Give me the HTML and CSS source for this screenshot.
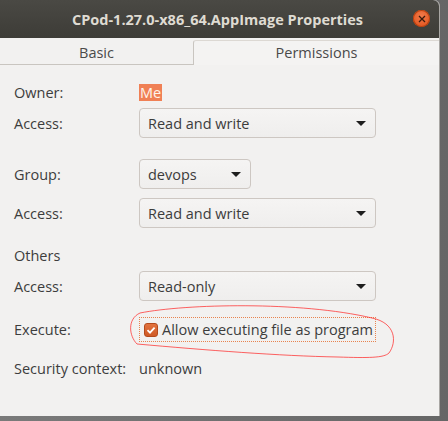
FILE: index.html
```html
<!DOCTYPE html>
<html>
<head>
<meta charset="utf-8">
<link rel="stylesheet" href="styles.css">
</head>
<body>
<div class="window">
  <div class="titlebar">
    <span class="title">CPod-1.27.0-x86_64.AppImage Properties</span>
    <span class="close"><svg width="8" height="8" viewBox="0 0 8 8"><path d="M1 1L7 7M7 1L1 7" stroke="#3a1a0c" stroke-width="1.3"/></svg></span>
  </div>
  <div class="tabs">
    <div class="tab">Basic</div>
    <div class="tab active">Permissions</div>
  </div>
  <div class="content">
    <div class="row r-owner">
      <span class="label">Owner:</span>
      <span class="value"><span class="sel">Me</span></span>
    </div>
    <div class="row r-access1">
      <span class="label">Access:</span>
      <div class="combo wide"><span>Read and write</span><span class="arrow"></span></div>
    </div>
    <div class="row r-group">
      <span class="label">Group:</span>
      <div class="combo narrow"><span>devops</span><span class="arrow"></span></div>
    </div>
    <div class="row r-access2">
      <span class="label">Access:</span>
      <div class="combo wide"><span>Read and write</span><span class="arrow"></span></div>
    </div>
    <div class="row r-others">
      <span class="label">Others</span>
    </div>
    <div class="row r-access3">
      <span class="label">Access:</span>
      <div class="combo wide"><span>Read-only</span><span class="arrow"></span></div>
    </div>
    <div class="row r-exec">
      <span class="label">Execute:</span>
      <div class="check-focus">
        <span class="checkbox"><svg width="10" height="10" viewBox="0 0 10 10"><path d="M1.5 5.2L4 7.6L8.6 2.6" fill="none" stroke="#fff" stroke-width="1.8"/></svg></span>
        <span>Allow executing file as program</span>
      </div>
    </div>
    <div class="row r-sec">
      <span class="label">Security context:</span>
      <span class="value">unknown</span>
    </div>
    <svg class="scribble" width="448" height="421" viewBox="0 0 448 421"><path d="M137 344 C129 336 127 319 140 313 C185 304 300 301 372 318 C396 323 397 342 389 353 C384 358 368 358 338 357 C280 356 205 350 137 344" fill="none" stroke="#f22" stroke-opacity="0.7" stroke-width="1"/></svg>
  </div>
</div>
</body>
</html>
```
FILE: styles.css
```css
html {
  background: #6c6c6c;
}
html, body {
  margin: 0;
  padding: 0;
}
body {
  width: 448px;
  height: 421px;
  background: linear-gradient(90deg, #7a7a7a 0%, #666 100%);
  font-family: "Open Sans", "DejaVu Sans", sans-serif;
  font-size: 14.5px;
  color: #3d3d3d;
  overflow: hidden;
}
.window {
  width: 440px;
  height: 416px;
  background: #f2f1f0;
  border-right: 1px solid #a9a7a4;
  box-sizing: border-box;
  border-radius: 0 6px 0 0;
  display: flex;
  flex-direction: column;
  position: relative;
}
.titlebar {
  height: 38px;
  flex: none;
  background: linear-gradient(#4a4944, #3d3c37);
  border-radius: 0 6px 0 0;
  display: flex;
  align-items: center;
  justify-content: center;
  position: relative;
}
.title {
  color: #dfdbd2;
  font-weight: bold;
  font-size: 14.5px;
  margin-left: -4px;
}
.close {
  position: absolute;
  right: 9px;
  top: 10px;
  width: 17px;
  height: 17px;
  border-radius: 50%;
  background: radial-gradient(circle at 50% 35%, #f27a4a, #df4d16);
  box-shadow: inset 0 0 0 1px #b8400f;
  display: flex;
  align-items: center;
  justify-content: center;
}
.tabs {
  height: 27px;
  flex: none;
  display: flex;
  border-bottom: 1px solid #c9c5c0;
  box-sizing: border-box;
  padding-top: 2px;
}
.tab {
  display: flex;
  align-items: center;
  justify-content: center;
  color: #4a4a4a;
  font-size: 14.5px;
}
.tab:first-child {
  width: 193px;
  padding-top: 1px;
}
.tab.active {
  flex: 1;
  border-left: 1px solid #c9c5c0;
  border-top: 1px solid #dcd8d3;
  border-radius: 3px 0 0 0;
  background: #f4f3f2;
  margin-bottom: -1px;
  padding-bottom: 1px;
}
.content {
  flex: 1;
  display: flex;
  flex-direction: column;
  padding: 17px 0 0 14px;
}
.row {
  display: grid;
  grid-template-columns: 125px auto;
  align-items: center;
  justify-items: start;
}
.r-owner { height: 20px; }
.r-access1 { margin-top: 6px; }
.r-group { margin-top: 21px; }
.r-access2 { margin-top: 9px; }
.r-others { height: 20px; margin-top: 17px; }
.r-access3 { margin-top: 6px; }
.r-exec { margin-top: 16px; }
.r-sec { height: 20px; margin-top: 16px; }
.sel {
  background: #f08055;
  color: #fff4ec;
  padding: 0 1px;
  display: inline-block;
  line-height: 17px;
}
.combo {
  height: 30px;
  box-sizing: border-box;
  border: 1px solid #cdc7c2;
  border-radius: 4px;
  background: linear-gradient(#f5f4f3, #efeeed);
  display: flex;
  align-items: center;
  justify-content: space-between;
  padding: 0 9px 0 8px;
  color: #3c3c3c;
}
.combo.wide { width: 237px; }
.combo.narrow { width: 112px; }
.arrow {
  width: 0;
  height: 0;
  border-left: 5px solid transparent;
  border-right: 5px solid transparent;
  border-top: 5px solid #1e1e1e;
  margin-top: 1px;
}
.check-focus {
  width: 237px;
  height: 25px;
  box-sizing: border-box;
  border: 1px dotted #e8834f;
  display: flex;
  align-items: center;
  gap: 4px;
  padding-left: 4px;
}
.checkbox {
  width: 14px;
  height: 14px;
  box-sizing: border-box;
  border-radius: 3px;
  background: linear-gradient(#e2733f, #cf5a26);
  border: 1px solid #b44a1c;
  display: flex;
  align-items: center;
  justify-content: center;
}
.scribble {
  position: absolute;
  left: 0;
  top: 0;
  pointer-events: none;
}
```
